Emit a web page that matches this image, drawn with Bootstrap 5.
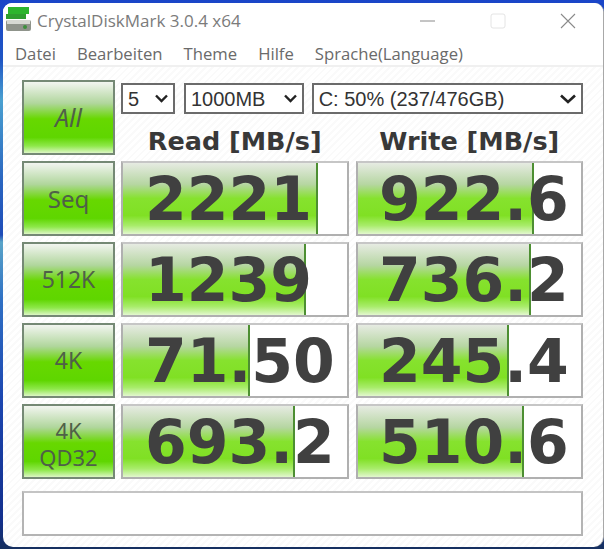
<!DOCTYPE html>
<html lang="de">
<head>
    <meta charset="UTF-8">
    <meta name="viewport" content="width=device-width, initial-scale=1.0">
    <title>CrystalDiskMark 3.0.4 x64</title>
    <link href="https://cdn.jsdelivr.net/npm/bootstrap@5.3.3/dist/css/bootstrap.min.css" rel="stylesheet">
    <style>
        html, body {
            height: 100%;
        }
        body {
            background: linear-gradient(180deg, #1a45c8 0, #1f56c4 60px, #4aa0d0 100px, #2a66c0 180px, #1e4cb8 235px, #5aa4c8 242px, #2f70c4 300px, #1c46b0 400px, #122f8c 520px, #16305f 549px);
            overflow: hidden;
            font-family: "Open Sans", "Noto Sans", sans-serif;
        }
        .app-window {
            margin: 3px 0 3px 3px;
            width: 601px;
            height: 544px;
            background: repeating-linear-gradient(135deg, #ffffff 0 3px, #fafafa 3px 5px);
            border-right: 1px solid #a8a8a8;
            border-radius: 9px 9px 10px 10px;
        }
        .title-bar {
            height: 36px;
            background: #fff;
            border-radius: 9px 9px 0 0;
            padding-left: 3px;
        }
        .app-icon {
            margin-bottom: 4px;
        }
        .title-text {
            font-size: 17px;
            color: #7b7b7b;
            margin-left: 5px;
        }
        .win-btn {
            width: 70px;
            height: 36px;
        }
        .menu-row {
            height: 28px;
            background: #fff;
            border-bottom: 2px solid #f0f0f0;
            font-size: 16.7px;
            color: #6a6a6a;
            padding-left: 12px;
            padding-top: 3px;
            gap: 21px;
        }
        .bench-grid {
            display: grid;
            grid-template-columns: 93px 228px 228px;
            column-gap: 6px;
            row-gap: 6px;
            padding: 13px 0 0 19px;
            grid-template-rows: repeat(5, 75px);
        }
        .bench-grid .score-box:nth-child(3n + 2) {
            margin-left: 1px;
            width: 227px;
        }
        .bench-grid .score-box:nth-child(3n + 2) .score-num {
            padding-left: 21px;
        }
        .go-btn {
            border: 2px solid #758975;
            background: linear-gradient(180deg, #f2f5f0 0%, #b0d69c 30%, #67d800 52%, #5fd600 78%, #8ee84a 90%, #dcf6c4 100%);
            color: #4f6048;
            font-family: "Noto Sans", sans-serif;
            font-size: 23px;
            line-height: 1.25;
            text-align: center;
        }
        .go-btn.all-btn {
            font-style: italic;
            font-size: 25px;
        }
        .go-btn.seq-btn {
            font-size: 24px;
        }
        .go-btn.qd-btn {
            font-size: 22px;
            padding-top: 5px;
        }
        .top-controls {
            grid-column: 2 / 4;
            padding-top: 3px;
        }
        .pick-row {
            gap: 9px;
        }
        .pick-row .pick-size {
            margin-right: -1px;
        }
        .pick-box {
            height: 31px;
            border: 2px solid #6b6b6b;
            background: #fff;
            font-family: "Liberation Sans", sans-serif;
            font-size: 20px;
            color: #333;
            padding: 0 5px;
        }
        .pick-count { width: 54px; }
        .pick-size { width: 120px; }
        .pick-drive { width: 272px; }
        .col-heads {
            font-family: "DejaVu Sans", sans-serif;
            font-weight: 700;
            font-size: 25.5px;
            color: #383838;
            line-height: 1;
            margin-top: 15px;
            gap: 7px;
        }
        .col-heads div {
            width: 228px;
        }
        .score-box {
            position: relative;
            border: 2px solid #b0b0b0;
            border-top-color: #c6c6c6;
            background: #fff;
            overflow: hidden;
        }
        .score-fill {
            position: absolute;
            left: 0;
            top: 0;
            bottom: 0;
            border-right: 2px solid #4d8f32;
            background: linear-gradient(180deg, #e6ebe2 0%, #b6d6a2 30%, #86e22e 50%, #80e024 74%, #a8ec6a 88%, #e2f7ce 100%);
        }
        .score-num {
            position: relative;
            font-family: "DejaVu Sans", sans-serif;
            font-weight: 700;
            font-size: 60px;
            line-height: 1;
            color: #404040;
            height: 100%;
            padding-left: 22px;
        }
        .status-box {
            margin: 12px 0 0 19px;
            width: 561px;
            height: 45px;
            border: 2px solid #b4b4b4;
            border-top-color: #c4c4c4;
            background: #fff;
        }
    </style>
</head>
<body>
    <div class="app-window">
        <div class="title-bar d-flex align-items-center">
            <svg class="app-icon" width="26" height="25" viewBox="0 0 26 25">
                <rect x="0" y="13" width="25" height="11" rx="2" fill="#8f948b"/>
                <rect x="1" y="13" width="23" height="4" fill="#d6d9d2"/>
                <circle cx="19" cy="20" r="2" fill="#3c8f3c"/>
                <rect x="0" y="7" width="20" height="5" fill="#2f9e2f"/>
                <rect x="2" y="0" width="21" height="7" fill="#2db52d"/>
            </svg>
            <span class="title-text">CrystalDiskMark 3.0.4 x64</span>
            <div class="ms-auto d-flex">
                <div class="win-btn d-flex align-items-center justify-content-center">
                    <svg width="16" height="16" viewBox="0 0 16 16"><path d="M0 8H15" stroke="#8a8a8a" stroke-width="1"/></svg>
                </div>
                <div class="win-btn d-flex align-items-center justify-content-center">
                    <svg width="16" height="16" viewBox="0 0 16 16"><rect x="1" y="1" width="14" height="14" rx="2" fill="none" stroke="#e4e4e4" stroke-width="1"/></svg>
                </div>
                <div class="win-btn d-flex align-items-center justify-content-center">
                    <svg width="16" height="16" viewBox="0 0 16 16"><path d="M1 1L15 15M15 1L1 15" stroke="#8a8a8a" stroke-width="1.1"/></svg>
                </div>
            </div>
        </div>
        <div class="menu-row d-flex align-items-center">
            <span>Datei</span>
            <span>Bearbeiten</span>
            <span>Theme</span>
            <span>Hilfe</span>
            <span>Sprache(Language)</span>
        </div>
        <div class="bench-grid">
            <div class="go-btn all-btn d-flex align-items-center justify-content-center">All</div>
            <div class="top-controls">
                <div class="pick-row d-flex">
                    <div class="pick-box pick-count d-flex align-items-center justify-content-between">5
                        <svg width="13" height="9" viewBox="0 0 13 9"><path d="M1 1.5L6.5 7L12 1.5" fill="none" stroke="#222" stroke-width="2.4"/></svg>
                    </div>
                    <div class="pick-box pick-size d-flex align-items-center justify-content-between">1000MB
                        <svg width="13" height="9" viewBox="0 0 13 9"><path d="M1 1.5L6.5 7L12 1.5" fill="none" stroke="#222" stroke-width="2.4"/></svg>
                    </div>
                    <div class="pick-box pick-drive d-flex align-items-center justify-content-between">C: 50% (237/476GB)
                        <svg width="16" height="10" viewBox="0 0 16 10"><path d="M1 1.5L8 8L15 1.5" fill="none" stroke="#222" stroke-width="2.6"/></svg>
                    </div>
                </div>
                <div class="col-heads d-flex text-center">
                    <div>Read [MB/s]</div>
                    <div>Write [MB/s]</div>
                </div>
            </div>

            <div class="go-btn seq-btn d-flex align-items-center justify-content-center">Seq</div>
            <div class="score-box"><div class="score-fill" style="width:195px"></div><div class="score-num d-flex align-items-center">2221</div></div>
            <div class="score-box"><div class="score-fill" style="width:176px"></div><div class="score-num d-flex align-items-center">922.6</div></div>

            <div class="go-btn d-flex align-items-center justify-content-center">512K</div>
            <div class="score-box"><div class="score-fill" style="width:183px"></div><div class="score-num d-flex align-items-center">1239</div></div>
            <div class="score-box"><div class="score-fill" style="width:173px"></div><div class="score-num d-flex align-items-center">736.2</div></div>

            <div class="go-btn d-flex align-items-center justify-content-center">4K</div>
            <div class="score-box"><div class="score-fill" style="width:127px"></div><div class="score-num d-flex align-items-center">71.50</div></div>
            <div class="score-box"><div class="score-fill" style="width:151px"></div><div class="score-num d-flex align-items-center">245.4</div></div>

            <div class="go-btn qd-btn d-flex align-items-center justify-content-center">4K<br>QD32</div>
            <div class="score-box"><div class="score-fill" style="width:172px"></div><div class="score-num d-flex align-items-center">693.2</div></div>
            <div class="score-box"><div class="score-fill" style="width:166px"></div><div class="score-num d-flex align-items-center">510.6</div></div>
        </div>
        <div class="status-box"></div>
    </div>
    <script src="https://cdn.jsdelivr.net/npm/bootstrap@5.3.3/dist/js/bootstrap.bundle.min.js"></script>
</body>
</html>
